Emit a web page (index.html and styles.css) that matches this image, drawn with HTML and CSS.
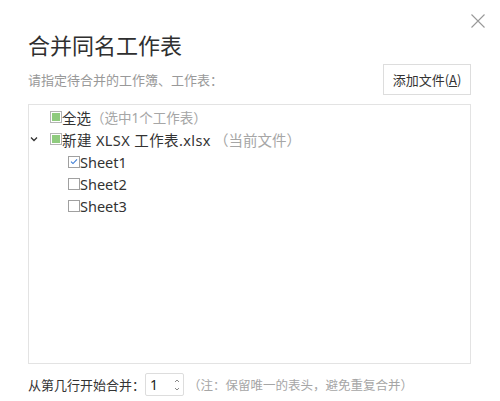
FILE: index.html
```html
<!DOCTYPE html>
<html lang="zh-CN">
<head>
  <meta charset="UTF-8" />
  <title>合并同名工作表</title>
  <link rel="stylesheet" href="styles.css">
</head>
<body>
  <div class="dialog">
    <button class="close" title="关闭">
      <svg width="16" height="16" viewBox="0 0 16 16"><path d="M1.5 1.5 L14.5 14.5 M14.5 1.5 L1.5 14.5" stroke="#999" stroke-width="1.1" fill="none"/></svg>
    </button>
    <h1 class="title">合并同名工作表</h1>
    <div class="head-row">
      <span class="hint">请指定待合并的工作簿、工作表：</span>
      <button class="add-btn">添加文件(<u>A</u>)</button>
    </div>

    <div class="tree">
      <div class="row lvl1 all">
        <span class="arrow"></span>
        <span class="cb mixed"></span>
        <span>全选</span><span class="muted">（选中1个工作表）</span>
      </div>
      <div class="row lvl1">
        <span class="arrow">
          <svg width="8" height="6" viewBox="0 0 8 6"><path d="M1 1.5 L4 4.5 L7 1.5" stroke="#333" stroke-width="1.3" fill="none"/></svg>
        </span>
        <span class="cb mixed"></span>
        <span class="file">新建 XLSX 工作表.xlsx</span><span class="muted">（当前文件）</span>
      </div>
      <div class="row lvl2">
        <span class="cb checked">
          <svg width="11" height="11" viewBox="0 0 11 11"><path d="M2.2 5.6 L4.4 7.8 L8.8 3.2" stroke="#3b7bd4" stroke-width="1.2" fill="none"/></svg>
        </span>
        <span>Sheet1</span>
      </div>
      <div class="row lvl2">
        <span class="cb"></span>
        <span>Sheet2</span>
      </div>
      <div class="row lvl2">
        <span class="cb"></span>
        <span>Sheet3</span>
      </div>
    </div>

    <div class="foot-row">
      <span>从第几行开始合并：</span>
      <div class="spin">
        <span>1</span>
        <span class="spin-arrows">
          <svg width="6" height="16" viewBox="0 0 6 16"><path d="M1 5 L3 3 L5 5 M1 11 L3 13 L5 11" stroke="#888" stroke-width="1" fill="none"/></svg>
        </span>
      </div>
      <span class="muted note">（注：保留唯一的表头，避免重复合并）</span>
    </div>
  </div>
</body>
</html>
```

FILE: styles.css
```css
body {
  margin: 0;
  background-color: #fff;
  color: #333;
  font-family: 'Segoe UI', 'Noto Sans', 'Noto Sans CJK SC', sans-serif;
}
.dialog {
  position: relative;
  width: 500px;
  height: 401px;
  box-sizing: border-box;
  padding: 29px 29px 0 28px;
}
.close {
  position: absolute;
  top: 13px;
  right: 14px;
  padding: 0;
  border: none;
  background: none;
  line-height: 0;
}
.title {
  margin: 0;
  font-family: 'Noto Sans CJK SC', sans-serif;
  font-size: 22px;
  font-weight: 400;
  line-height: 30px;
  color: #2f2f2f;
}
.head-row {
  display: flex;
  justify-content: space-between;
  align-items: flex-end;
  margin-top: 5px;
}
.hint {
  font-family: 'Noto Sans CJK SC', sans-serif;
  font-size: 13px;
  color: #999;
  line-height: 20px;
  margin-bottom: 5px;
}
.add-btn {
  width: 88px;
  height: 31px;
  padding: 0;
  border: 1px solid #ddd;
  background: #fff;
  font-family: 'Noto Sans CJK SC', sans-serif;
  font-size: 13px;
  color: #333;
}
.tree {
  margin-top: 9px;
  height: 260px;
  box-sizing: border-box;
  border: 1px solid #e3e3e3;
  padding-top: 1px;
  font-size: 14.5px;
}
.row {
  display: flex;
  align-items: center;
  height: 22.3px;
  white-space: nowrap;
}
.row span {
  font-family: 'Segoe UI', 'Noto Sans', 'Noto Sans CJK SC', sans-serif;
}
.row.all .muted {
  font-size: 13.5px;
}
.row .file {
  letter-spacing: 0.4px;
  margin-right: 3px;
}
.lvl1 {
  padding-left: 0;
}
.lvl2 {
  padding-left: 39px;
}
.arrow {
  width: 10px;
  margin-right: 11px;
  display: flex;
  justify-content: center;
  line-height: 0;
}
.cb {
  width: 12px;
  height: 12px;
  box-sizing: border-box;
  border: 1px solid #a0a0a0;
  background: #fff;
  display: flex;
  align-items: center;
  justify-content: center;
  line-height: 0;
}
.cb.mixed {
  border-color: #b4b4b4;
}
.cb.mixed::after {
  content: "";
  width: 8px;
  height: 8px;
  background: #8fcb7e;
}
.muted {
  color: #a6a6a6;
}
.foot-row {
  display: flex;
  align-items: center;
  margin-top: 9px;
  font-family: 'Noto Sans CJK SC', sans-serif;
  font-size: 13px;
}
.spin {
  width: 39px;
  height: 23px;
  box-sizing: border-box;
  border: 1px solid #ddd;
  border-radius: 2px;
  display: flex;
  align-items: center;
  justify-content: space-between;
  padding: 0 3px 0 4px;
  font-family: 'Segoe UI', 'Noto Sans', sans-serif;
  font-size: 14px;
  color: #222;
}
.spin-arrows {
  line-height: 0;
}
.note {
  margin-left: 4px;
  font-size: 12.5px;
}
```
